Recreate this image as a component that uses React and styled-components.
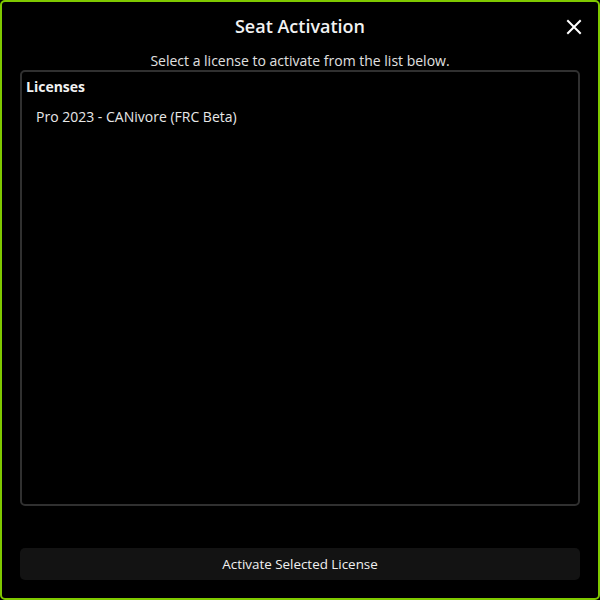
import React from "react";
import styled, { createGlobalStyle } from "styled-components";

const GlobalStyle = createGlobalStyle`
	html, body {
		margin: 0;
		padding: 0;
		background: #000;
	}
	body {
		font-family: "Open Sans", "Noto Sans", sans-serif;
	}
`;

const Window = styled.div`
	box-sizing: border-box;
	width: 600px;
	height: 600px;
	border: 2px solid #7fc800;
	border-radius: 5px;
	background: #000;
	display: flex;
	flex-direction: column;
	padding: 0 18px 18px;
	color: #fff;
`;

const Header = styled.div`
	position: relative;
	display: flex;
	justify-content: center;
	align-items: center;
	height: 48px;
`;

const Title = styled.h1`
	margin: 0;
	font-size: 18px;
	font-weight: 600;
	color: #f2f2f2;
`;

const CloseButton = styled.button`
	position: absolute;
	right: -5px;
	top: 14px;
	width: 22px;
	height: 22px;
	padding: 0;
	border: none;
	background: transparent;
	display: flex;
	align-items: center;
	justify-content: center;
	cursor: pointer;
`;

const Subtitle = styled.div`
	text-align: center;
	font-size: 14px;
	color: #e0e0e0;
	line-height: 18px;
	margin-top: 2px;
`;

const ListBox = styled.div`
	flex: 0 0 436px;
	box-sizing: border-box;
	border: 2px solid #303030;
	border-radius: 5px;
	padding: 4px 4px;
	display: flex;
	flex-direction: column;
`;

const ListHeading = styled.div`
	font-size: 14px;
	font-weight: 700;
	color: #f2f2f2;
	line-height: 22px;
`;

const ListItem = styled.div`
	font-size: 14px;
	color: #e8e8e8;
	padding: 10px 10px 8px;
	line-height: 18px;
`;

const Spacer = styled.div`
	flex: 1;
`;

const ActionButton = styled.button`
	height: 32px;
	border: none;
	border-radius: 5px;
	background: #131313;
	color: #f0f0f0;
	font-family: "Open Sans", "Noto Sans", sans-serif;
	font-size: 13.4px;
	cursor: pointer;
`;

export default function App() {
	return (
		<>
			<GlobalStyle />
			<Window>
				<Header>
					<Title>Seat Activation</Title>
					<CloseButton aria-label="Close">
						<svg width="16" height="16" viewBox="0 0 16 16">
							<path d="M2 2 L14 14 M14 2 L2 14" stroke="#fff" strokeWidth="2" strokeLinecap="square" />
						</svg>
					</CloseButton>
				</Header>
				<Subtitle>Select a license to activate from the list below.</Subtitle>
				<ListBox>
					<ListHeading>Licenses</ListHeading>
					<ListItem>Pro 2023 - CANivore (FRC Beta)</ListItem>
				</ListBox>
				<Spacer />
				<ActionButton>Activate Selected License</ActionButton>
			</Window>
		</>
	);
}
